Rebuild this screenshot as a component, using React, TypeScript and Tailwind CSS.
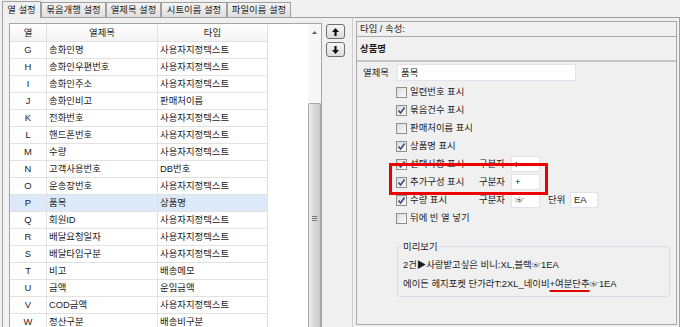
import React from "react";

const rows: [string, string, string][] = [
  ["G", "송화인명", "사용자지정텍스트"],
  ["H", "송화인우편번호", "사용자지정텍스트"],
  ["I", "송화인주소", "사용자지정텍스트"],
  ["J", "송화인비고", "판매처이름"],
  ["K", "전화번호", "사용자지정텍스트"],
  ["L", "핸드폰번호", "사용자지정텍스트"],
  ["M", "수량", "사용자지정텍스트"],
  ["N", "고객사용번호", "DB번호"],
  ["O", "운송장번호", "사용자지정텍스트"],
  ["P", "품목", "상품명"],
  ["Q", "회원ID", "사용자지정텍스트"],
  ["R", "배달요청일자", "사용자지정텍스트"],
  ["S", "배달타입구분", "사용자지정텍스트"],
  ["T", "비고", "배송메모"],
  ["U", "금액", "운임금액"],
  ["V", "COD금액", "사용자지정텍스트"],
  ["W", "정산구분", "배송비구분"],
];

function Tab({ w, children }: { w: string; children: React.ReactNode }) {
  return (
    <div
      className={`${w} flex h-[15px] items-center justify-center border border-b-0 border-[#a0a0a0] bg-gradient-to-b from-[#f4f4f4] to-[#dedede] leading-none`}
    >
      {children}
    </div>
  );
}

function Check({ checked }: { checked: boolean }) {
  return (
    <div className="flex h-[11px] w-[11px] shrink-0 items-center justify-center border border-[#8e8f8f] bg-gradient-to-br from-[#dcdcdc] to-[#fbfbfb]">
      {checked && (
        <svg width="9" height="9" viewBox="0 0 9 9">
          <path d="M1.5 4.5 L3.6 7 L7.6 1.6" fill="none" stroke="#3a4a7c" strokeWidth="1.6" />
        </svg>
      )}
    </div>
  );
}

function Field({ w, children }: { w: string; children?: React.ReactNode }) {
  return (
    <div className={`${w} flex h-[16px] shrink-0 items-center border border-[#e2e3ea] bg-white px-[3px] leading-none`}>
      {children}
    </div>
  );
}

function CheckRow({
  checked,
  label,
  children,
}: {
  checked: boolean;
  label: string;
  children?: React.ReactNode;
}) {
  return (
    <div className="flex h-[18px] items-center">
      <Check checked={checked} />
      <span className="ml-[3px] w-[69px] shrink-0 whitespace-nowrap leading-none">{label}</span>
      {children}
    </div>
  );
}

export default function App() {
  return (
    <div className="relative h-[327px] w-[680px] overflow-hidden bg-[#f0f0f0] font-['Liberation_Sans','Noto_Sans_CJK_KR',sans-serif] text-[9.4px] text-[#1b1b1b]">
      {/* Tabs */}
      <div className="flex h-[17px] items-end pl-[2px]">
        <div className="relative z-10 -mb-px flex h-[17px] w-[39px] items-center justify-center border border-b-0 border-[#a0a0a0] bg-[#f0f0f0] leading-none">
          열 설정
        </div>
        <Tab w="w-[65px]">묶음개행 설정</Tab>
        <Tab w="w-[55px]">열제목 설정</Tab>
        <Tab w="w-[66px]">시트이름 설정</Tab>
        <Tab w="w-[64px]">파일이름 설정</Tab>
      </div>

      {/* Tab panel */}
      <div className="ml-[2px] flex h-[310px] w-[678px] border border-b-0 border-[#a0a0a0]">
        {/* Grid */}
        <div className="ml-[6px] mt-[5px] flex h-[320px] w-[313px] shrink-0 border border-b-0 border-[#a5a5a5] bg-white">
          <div className="w-[298px] shrink-0">
            <div className="flex h-[18px] w-[258px] border-b border-[#e2e2e2] bg-gradient-to-b from-white to-[#f3f3f3] leading-none">
              <div className="flex w-[37px] items-center justify-center border-r border-[#e2e2e2]">열</div>
              <div className="flex w-[111px] items-center justify-center border-r border-[#e2e2e2]">열제목</div>
              <div className="flex w-[110px] items-center justify-center border-r border-[#e2e2e2]">타입</div>
            </div>
            {rows.map(([c, t, ty]) => (
              <div
                key={c}
                className={`flex h-[17px] w-[258px] border-b border-[#e2e2e2] leading-none ${
                  c === "P" ? "bg-[#dce9f8]" : ""
                }`}
              >
                <div className="flex w-[37px] items-center justify-center border-r border-[#e2e2e2]">{c}</div>
                <div className="flex w-[111px] items-center border-r border-[#e2e2e2] pl-[2px] whitespace-nowrap">{t}</div>
                <div className="flex w-[110px] items-center border-r border-[#e2e2e2] pl-[2px] whitespace-nowrap">{ty}</div>
              </div>
            ))}
          </div>
          {/* Scrollbar */}
          <div className="flex w-[13px] shrink-0 flex-col bg-[#f7f7f7]">
            <div className="flex h-[17px] shrink-0 items-center justify-center">
              <svg width="5" height="3" viewBox="0 0 5 3">
                <path d="M0 3 L2.5 0 L5 3 Z" fill="#606060" />
              </svg>
            </div>
            <div className="h-[62px] shrink-0" />
            <div className="flex flex-1 flex-col items-center rounded-t-[2px] border border-b-0 border-[#a9a9a9] bg-gradient-to-r from-[#ececec] via-[#d9d9d9] to-[#c9c9c9]">
              <div className="mt-[112px] flex flex-col gap-[1px]">
                <div className="h-px w-[5px] bg-[#7a7a7a]" />
                <div className="h-px w-[5px] bg-[#7a7a7a]" />
                <div className="h-px w-[5px] bg-[#7a7a7a]" />
              </div>
            </div>
          </div>
        </div>

        {/* Up/Down buttons */}
        <div className="ml-[4px] mt-[6px] flex w-[19px] shrink-0 flex-col gap-[3px]">
          <div className="flex h-[15px] items-center justify-center rounded-[3px] border border-[#707070] bg-gradient-to-b from-[#f6f6f6] to-[#dcdcdc]">
            <svg width="7" height="8" viewBox="0 0 7 8">
              <path d="M3.5 0 L7 4 L4.6 4 L4.6 8 L2.4 8 L2.4 4 L0 4 Z" fill="#111" />
            </svg>
          </div>
          <div className="flex h-[15px] items-center justify-center rounded-[3px] border border-[#707070] bg-gradient-to-b from-[#f6f6f6] to-[#dcdcdc]">
            <svg width="7" height="8" viewBox="0 0 7 8">
              <path d="M3.5 8 L7 4 L4.6 4 L4.6 0 L2.4 0 L2.4 4 L0 4 Z" fill="#111" />
            </svg>
          </div>
        </div>

        {/* Right section */}
        <div className="ml-[7px] flex-1 border-l border-[#cfcfcf]">
          <div className="ml-[3px] mt-[3px] flex h-[304px] w-[321px] flex-col border border-[#a9a9a9]">
            <div className="flex h-[15px] items-center border-b border-[#a9a9a9] pl-[3px] leading-none">
              타입 / 속성:
            </div>
            <div className="flex h-[25px] items-center border-b-2 border-[#c6c6c6] pl-[3px] font-bold leading-none">
              상품명
            </div>
            <div className="flex flex-col">
              <div className="mt-[2px] flex h-[17px] items-center">
                <span className="w-[40px] pl-[6px] leading-none">열제목</span>
                <div className="flex h-[17px] w-[179px] items-center border border-[#e2e3ea] bg-white px-[3px] leading-none">
                  품목
                </div>
              </div>
              <div className="mt-[2px] flex flex-col pl-[39px]">
                <CheckRow checked={false} label="일련번호 표시" />
                <CheckRow checked={true} label="묶음건수 표시" />
                <CheckRow checked={false} label="판매처이름 표시" />
                <CheckRow checked={true} label="상품명 표시" />
                <CheckRow checked={true} label="선택사항 표시">
                  <span className="w-[32px] shrink-0 leading-none">구분자</span>
                  <Field w="w-[29px]">:</Field>
                </CheckRow>
                <CheckRow checked={true} label="추가구성 표시">
                  <span className="w-[32px] shrink-0 leading-none">구분자</span>
                  <Field w="w-[29px]">+</Field>
                </CheckRow>
                <CheckRow checked={true} label="수량 표시">
                  <span className="w-[32px] shrink-0 leading-none">구분자</span>
                  <Field w="w-[29px]">☞</Field>
                  <span className="ml-[8px] w-[22px] shrink-0 leading-none">단위</span>
                  <Field w="w-[28px]">EA</Field>
                </CheckRow>
                <CheckRow checked={false} label="뒤에 빈 열 넣기" />
              </div>
              <div className="relative ml-[40px] mt-[19px] h-[51px] w-[273px] rounded-[3px] border border-[#d7dde2] pl-[5px] pt-[8px]">
                <span className="absolute -top-[7px] left-[4px] bg-[#f0f0f0] px-[1px] leading-[13px]">미리보기</span>
                <div className="whitespace-nowrap leading-[19px]">2건▶사랑받고싶은 비니:XL,블랙☞1EA</div>
                <div className="whitespace-nowrap leading-[19px]">
                  에이든 헤지포켓 단가라T:2XL_네이비
                  <span className="underline decoration-[#e10000] decoration-2 underline-offset-[3px]">+여분단추</span>
                  ☞1EA
                </div>
              </div>
            </div>
          </div>
        </div>
      </div>

      {/* Red highlight annotation */}
      <div className="absolute left-[389px] top-[163px] h-[32px] w-[159px] border-[3px] border-[#ee0000]" />
    </div>
  );
}
